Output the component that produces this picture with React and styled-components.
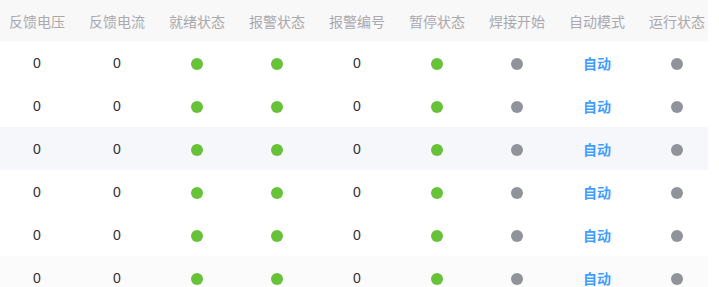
import React from 'react';
import styled, { createGlobalStyle } from 'styled-components';

const GlobalStyle = createGlobalStyle`
    html, body {
        margin: 0;
        padding: 0;
        background: #ffffff;
    }
    body {
        font-family: "Liberation Sans", "Noto Sans CJK SC", sans-serif;
        font-size: 14px;
    }
`;

const Viewport = styled.div`
    width: 708px;
    height: 287px;
    overflow: hidden;
`;

const Table = styled.table`
    border-collapse: collapse;
    table-layout: fixed;
    width: 720px;
    margin-left: -3px;
`;

const HeadCell = styled.th`
    width: 80px;
    height: 41px;
    padding: 0;
    background: #f8f8f9;
    color: #aaa8ad;
    font-weight: normal;
    font-size: 14px;
    text-align: center;
    white-space: nowrap;
`;

const Row = styled.tr`
    background: ${p => p.$bg || '#ffffff'};
`;

const Cell = styled.td`
    height: 43px;
    padding: 0;
    text-align: center;
    color: #303133;
    font-size: 14px;
`;

const Dot = styled.span`
    display: inline-block;
    width: 12px;
    height: 12px;
    border-radius: 50%;
    vertical-align: middle;
    background: ${p => (p.$on ? '#67c23a' : '#909399')};
`;

const Mode = styled.span`
    color: #409eff;
    font-weight: bold;
    font-size: 14px;
`;

const headers = ['反馈电压', '反馈电流', '就绪状态', '报警状态', '报警编号', '暂停状态', '焊接开始', '自动模式', '运行状态'];

const rowBgs = ['#ffffff', '#ffffff', '#f5f7fa', '#ffffff', '#ffffff', '#fbfbfc'];

export default function App() {
    return (
        <Viewport>
            <GlobalStyle />
            <Table>
                <thead>
                    <tr>
                        {headers.map(h => <HeadCell key={h}>{h}</HeadCell>)}
                    </tr>
                </thead>
                <tbody>
                    {rowBgs.map((bg, i) => (
                        <Row key={i} $bg={bg}>
                            <Cell>0</Cell>
                            <Cell>0</Cell>
                            <Cell><Dot $on /></Cell>
                            <Cell><Dot $on /></Cell>
                            <Cell>0</Cell>
                            <Cell><Dot $on /></Cell>
                            <Cell><Dot /></Cell>
                            <Cell><Mode>自动</Mode></Cell>
                            <Cell><Dot /></Cell>
                        </Row>
                    ))}
                </tbody>
            </Table>
        </Viewport>
    );
}
